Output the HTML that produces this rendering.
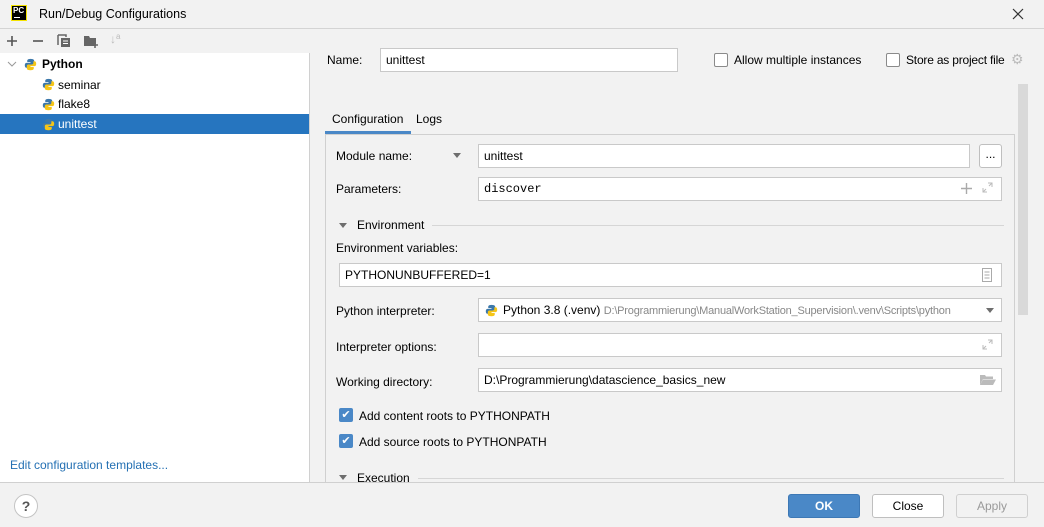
<!DOCTYPE html>
<html><head><meta charset="utf-8"><style>
*{box-sizing:border-box;margin:0;padding:0}
body{width:1044px;height:527px;background:#f2f2f2;font-family:"Liberation Sans",sans-serif;font-size:12px;color:#000;position:relative;overflow:hidden}
.a{position:absolute;white-space:nowrap}
.in{position:absolute;background:#fff;border:1px solid #c9c9c9;height:24px;line-height:22px;padding-left:5px;overflow:hidden;white-space:nowrap}
.cb{position:absolute;width:14px;height:14px;border:1px solid #8a8a8a;border-radius:2px;background:#fff}
.cbc{position:absolute;width:14px;height:14px;border-radius:2px;background:#4a88c7;color:#fff;font-size:11px;line-height:14px;text-align:center}
.tri{position:absolute;width:0;height:0;border-left:4px solid transparent;border-right:4px solid transparent;border-top:5px solid #6e6e6e}
.py{position:absolute;width:13px;height:13px}
.btn{position:absolute;height:24px;border:1px solid #bfbfbf;border-radius:3px;background:#fff;text-align:center;line-height:22px}
</style></head><body>
<!-- title -->
<div class="a" style="left:11px;top:5px;width:16px;height:16px;background:#000;border:1px solid #f5e400"></div>
<div class="a" style="left:13px;top:6px;color:#fff;font-size:8px;font-weight:bold;line-height:9px">PC</div>
<div class="a" style="left:14px;top:17px;width:6px;height:1px;background:#fff"></div>
<div class="a" style="left:39px;top:7px;font-size:12.5px">Run/Debug Configurations</div>
<svg class="a" style="left:1012px;top:8px" width="12" height="12" viewBox="0 0 12 12"><path d="M1 1L11 11M11 1L1 11" stroke="#333" stroke-width="1.2"/></svg>
<div class="a" style="left:0;top:28px;width:1044px;height:1px;background:#d4d4d4"></div>
<!-- toolbar -->
<svg class="a" style="left:6px;top:35px" width="12" height="12"><path d="M6 1V11M1 6H11" stroke="#555" stroke-width="1.6"/></svg>
<svg class="a" style="left:32px;top:35px" width="12" height="12"><path d="M1 6H11" stroke="#555" stroke-width="1.6"/></svg>
<svg class="a" style="left:57px;top:34px" width="14" height="14"><path d="M1 1H9V3" stroke="#666" stroke-width="1.5" fill="none"/><path d="M1 1V11" stroke="#666" stroke-width="1.5"/><rect x="4" y="4" width="9" height="9" fill="#666"/><path d="M6 7H11M6 9.5H11" stroke="#fff" stroke-width="1"/></svg>
<svg class="a" style="left:83px;top:34px" width="16" height="14"><path d="M1 2H6L7 4H13V12H1Z" fill="#666"/><path d="M12 8V14M9 11H15" stroke="#666" stroke-width="1.6"/><path d="M12 9V13M10 11H14" stroke="#fff" stroke-width="0"/></svg>
<div class="a" style="left:110px;top:32px;font-size:12px;color:#bbb">↓<span style="font-size:8px;vertical-align:top">a</span></div>
<!-- left panel -->
<div class="a" style="left:0;top:53px;width:310px;height:430px;background:#fff;border-right:1px solid #d0d0d0"></div>
<svg class="a" style="left:7px;top:61px" width="10" height="6"><path d="M1 1L5 5L9 1" stroke="#999" fill="none"/></svg>
<svg class="py" style="left:24px;top:58px" viewBox="0 0 16 16"><path d="M8 1C4 1 4 3 4 3v2h4v1H3S1 6 1 9s2 3 2 3h1.5V10s0-2 2-2h4s2 0 2-2V3s0-2-4.5-2z" fill="#3c78aa"/><path d="M8 15c4 0 4-2 4-2v-2H8v-1h5s2 0 2-3-2-3-2-3h-1.5v2s0 2-2 2h-4s-2 0-2 2v3s0 2 4.5 2z" fill="#f5c518"/></svg>
<div class="a" style="left:42px;top:57px;font-weight:bold">Python</div>
<svg class="py" style="left:42px;top:78px" viewBox="0 0 16 16"><path d="M8 1C4 1 4 3 4 3v2h4v1H3S1 6 1 9s2 3 2 3h1.5V10s0-2 2-2h4s2 0 2-2V3s0-2-4.5-2z" fill="#3c78aa"/><path d="M8 15c4 0 4-2 4-2v-2H8v-1h5s2 0 2-3-2-3-2-3h-1.5v2s0 2-2 2h-4s-2 0-2 2v3s0 2 4.5 2z" fill="#f5c518"/></svg>
<div class="a" style="left:58px;top:78px">seminar</div>
<svg class="py" style="left:42px;top:98px" viewBox="0 0 16 16"><path d="M8 1C4 1 4 3 4 3v2h4v1H3S1 6 1 9s2 3 2 3h1.5V10s0-2 2-2h4s2 0 2-2V3s0-2-4.5-2z" fill="#3c78aa"/><path d="M8 15c4 0 4-2 4-2v-2H8v-1h5s2 0 2-3-2-3-2-3h-1.5v2s0 2-2 2h-4s-2 0-2 2v3s0 2 4.5 2z" fill="#f5c518"/></svg>
<div class="a" style="left:58px;top:97px">flake8</div>
<div class="a" style="left:0;top:114px;width:309px;height:20px;background:#2675bf"></div>
<svg class="py" style="left:42px;top:118px" viewBox="0 0 16 16"><path d="M8 1C4 1 4 3 4 3v2h4v1H3S1 6 1 9s2 3 2 3h1.5V10s0-2 2-2h4s2 0 2-2V3s0-2-4.5-2z" fill="#3c78aa"/><path d="M8 15c4 0 4-2 4-2v-2H8v-1h5s2 0 2-3-2-3-2-3h-1.5v2s0 2-2 2h-4s-2 0-2 2v3s0 2 4.5 2z" fill="#f5c518"/></svg>
<div class="a" style="left:58px;top:117px;color:#fff">unittest</div>
<div class="a" style="left:10px;top:458px;color:#2470b3">Edit configuration templates...</div>
<!-- right -->
<div class="a" style="left:327px;top:53px">Name:</div>
<div class="in" style="left:380px;top:48px;width:298px">unittest</div>
<div class="cb" style="left:714px;top:53px"></div>
<div class="a" style="left:734px;top:53px">Allow multiple instances</div>
<div class="cb" style="left:886px;top:53px"></div>
<div class="a" style="left:906px;top:53px;letter-spacing:-0.2px">Store as project file</div>
<div class="a" style="left:1011px;top:51px;font-size:14px;color:#bbb">⚙</div>
<div class="a" style="left:1018px;top:84px;width:10px;height:231px;background:#d9d9d9"></div>
<div class="a" style="left:332px;top:112px">Configuration</div>
<div class="a" style="left:416px;top:112px">Logs</div>
<div class="a" style="left:325px;top:131px;width:86px;height:3px;background:#4a88c7"></div>
<div class="a" style="left:325px;top:134px;width:690px;height:360px;border:1px solid #d0d0d0"></div>
<div class="a" style="left:336px;top:149px">Module name:</div>
<div class="tri" style="left:453px;top:153px"></div>
<div class="in" style="left:478px;top:144px;width:492px">unittest</div>
<div class="btn" style="left:979px;top:144px;width:23px;line-height:18px">...</div>
<div class="a" style="left:336px;top:182px">Parameters:</div>
<div class="in" style="left:478px;top:177px;width:524px;font-family:'Liberation Mono',monospace">discover</div>
<svg class="a" style="left:961px;top:183px" width="11" height="11"><path d="M5.5 0V11M0 5.5H11" stroke="#aaa" stroke-width="1.4"/></svg>
<svg class="a" style="left:982px;top:182px" width="11" height="11"><path d="M6 1H10V5M10 1L7 4M1 6V10H5M1 10L4 7" stroke="#bbb" fill="none"/></svg>
<div class="tri" style="left:339px;top:223px"></div>
<div class="a" style="left:357px;top:218px">Environment</div>
<div class="a" style="left:432px;top:225px;width:572px;height:1px;background:#d6d6d6"></div>
<div class="a" style="left:336px;top:241px">Environment variables:</div>
<div class="in" style="left:339px;top:263px;width:663px">PYTHONUNBUFFERED=1</div>
<svg class="a" style="left:982px;top:268px" width="10" height="14"><rect x="0.5" y="0.5" width="9" height="13" fill="none" stroke="#aaa"/><path d="M2.5 4H7.5M2.5 7H7.5M2.5 10H7.5" stroke="#aaa"/></svg>
<div class="a" style="left:336px;top:304px">Python interpreter:</div>
<div class="in" style="left:478px;top:298px;width:524px;padding-left:24px;padding-right:24px">Python 3.8 (.venv) <span style="color:#888;font-size:11px;letter-spacing:-0.2px">D:\Programmierung\ManualWorkStation_Supervision\.venv\Scripts\python</span></div>
<svg class="py" style="left:485px;top:304px" viewBox="0 0 16 16"><path d="M8 1C4 1 4 3 4 3v2h4v1H3S1 6 1 9s2 3 2 3h1.5V10s0-2 2-2h4s2 0 2-2V3s0-2-4.5-2z" fill="#3c78aa"/><path d="M8 15c4 0 4-2 4-2v-2H8v-1h5s2 0 2-3-2-3-2-3h-1.5v2s0 2-2 2h-4s-2 0-2 2v3s0 2 4.5 2z" fill="#f5c518"/></svg>
<div class="tri" style="left:986px;top:308px"></div>
<div class="a" style="left:336px;top:340px">Interpreter options:</div>
<div class="in" style="left:478px;top:333px;width:524px"></div>
<svg class="a" style="left:982px;top:339px" width="11" height="11"><path d="M6 1H10V5M10 1L7 4M1 6V10H5M1 10L4 7" stroke="#bbb" fill="none"/></svg>
<div class="a" style="left:336px;top:375px">Working directory:</div>
<div class="in" style="left:478px;top:368px;width:524px">D:\Programmierung\datascience_basics_new</div>
<svg class="a" style="left:980px;top:374px" width="16" height="12"><path d="M0 1H5L6 2.5H13V5H3L0 11Z" fill="#bbb"/><path d="M3 5.5H16L13 11H0Z" fill="#bbb"/></svg>
<div class="cbc" style="left:339px;top:408px">✔</div>
<div class="a" style="left:359px;top:409px">Add content roots to PYTHONPATH</div>
<div class="cbc" style="left:339px;top:434px">✔</div>
<div class="a" style="left:359px;top:435px">Add source roots to PYTHONPATH</div>
<div class="tri" style="left:339px;top:475px"></div>
<div class="a" style="left:357px;top:471px">Execution</div>
<div class="a" style="left:418px;top:478px;width:586px;height:1px;background:#d6d6d6"></div>
<!-- bottom -->
<div class="a" style="left:0;top:482px;width:1044px;height:45px;background:#f2f2f2;border-top:1px solid #d0d0d0"></div>
<div class="a" style="left:14px;top:494px;width:24px;height:24px;border:1px solid #c4c4c4;border-radius:50%;background:#fff;text-align:center;line-height:22px;font-weight:bold;color:#555;font-size:14px">?</div>
<div class="btn" style="left:788px;top:494px;width:72px;background:#4a88c7;border-color:#3d78b5;color:#fff;font-weight:bold">OK</div>
<div class="btn" style="left:872px;top:494px;width:72px">Close</div>
<div class="btn" style="left:956px;top:494px;width:72px;background:#f2f2f2;border-color:#cfcfcf;color:#999">Apply</div>
</body></html>
